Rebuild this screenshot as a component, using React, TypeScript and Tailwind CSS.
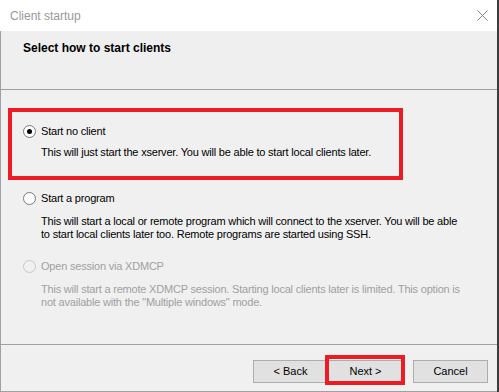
import React from 'react';

function Radio({ checked, disabled }: { checked?: boolean; disabled?: boolean }) {
  return (
    <span
      className={`w-[13px] h-[13px] rounded-full border flex items-center justify-center shrink-0 ${
        disabled ? 'border-[#c8c8c8] bg-[#f0f0f0]' : 'border-[#7a7a7a] bg-white'
      }`}
    >
      {checked && <span className="w-[5px] h-[5px] rounded-full bg-black" />}
    </span>
  );
}

function Button({ label, marked }: { label: string; marked?: boolean }) {
  return (
    <div className="relative">
      <button className="w-[75px] h-[23px] bg-[#e1e1e1] border border-[#adadad] text-[11px] leading-[13px] text-black">
        {label}
      </button>
      {marked && (
        <div className="absolute -left-[3px] -top-[3px] -right-[2px] -bottom-[2px] border-4 border-[#ed1c24] pointer-events-none" />
      )}
    </div>
  );
}

export default function App() {
  return (
    <div
      className="w-[499px] h-[392px] flex flex-col bg-white border-r-2 border-[#3c3c3c] overflow-hidden"
      style={{ fontFamily: '"Liberation Sans", Arial, sans-serif' }}
    >
      {/* title bar */}
      <div className="h-[31px] shrink-0 bg-white flex items-center justify-between pl-[10px] pr-[9px]">
        <span className="text-[12px] text-[#999]">Client startup</span>
        <svg width="11" height="11" viewBox="0 0 11 11">
          <path d="M0.5 0.5 L10.5 10.5 M10.5 0.5 L0.5 10.5" stroke="#808080" strokeWidth="1" />
        </svg>
      </div>

      <div className="flex flex-col border-l border-b border-[#a0a0a0] bg-[#f0f0f0]">
        {/* header */}
        <div className="h-[59px] bg-[#efefef] border-b border-[#a0a0a0] pl-[22px] pt-[10px]">
          <h1 className="text-[12px] leading-[14px] font-bold text-black">Select how to start clients</h1>
        </div>

        {/* options */}
        <div className="h-[254px] flex flex-col text-[11px] leading-[13px] tracking-[-0.2px] text-black">
          <div className="ml-[7px] mt-[18px] w-[395px] h-[72px] border-4 border-[#ed1c24] pl-[11px] pt-[13px]">
            <div className="flex items-center gap-[5px]">
              <Radio checked />
              <span>Start no client</span>
            </div>
            <p className="mt-[8px] pl-[18px]">
              This will just start the xserver. You will be able to start local clients later.
            </p>
          </div>

          <div className="pl-[22px] mt-[12px]">
            <div className="flex items-center gap-[5px]">
              <Radio />
              <span>Start a program</span>
            </div>
            <p className="mt-[10px] pl-[18px]">
              This will start a local or remote program which will connect to the xserver. You will be able
              <br />
              to start local clients later too. Remote programs are started using SSH.
            </p>
          </div>

          <div className="pl-[22px] mt-[19px] text-[#a0a0a0]">
            <div className="flex items-center gap-[5px]">
              <Radio disabled />
              <span>Open session via XDMCP</span>
            </div>
            <p className="mt-[10px] pl-[18px]">
              This will start a remote XDMCP session. Starting local clients later is limited. This option is
              <br />
              not available with the "Multiple windows" mode.
            </p>
          </div>
        </div>

        {/* buttons */}
        <div className="h-[47px] border-t border-[#a0a0a0] flex justify-end items-start pt-[13px] pr-[9px]">
          <Button label="< Back" />
          <Button label="Next >" marked />
          <div className="w-[10px]" />
          <Button label="Cancel" />
        </div>
      </div>
    </div>
  );
}
